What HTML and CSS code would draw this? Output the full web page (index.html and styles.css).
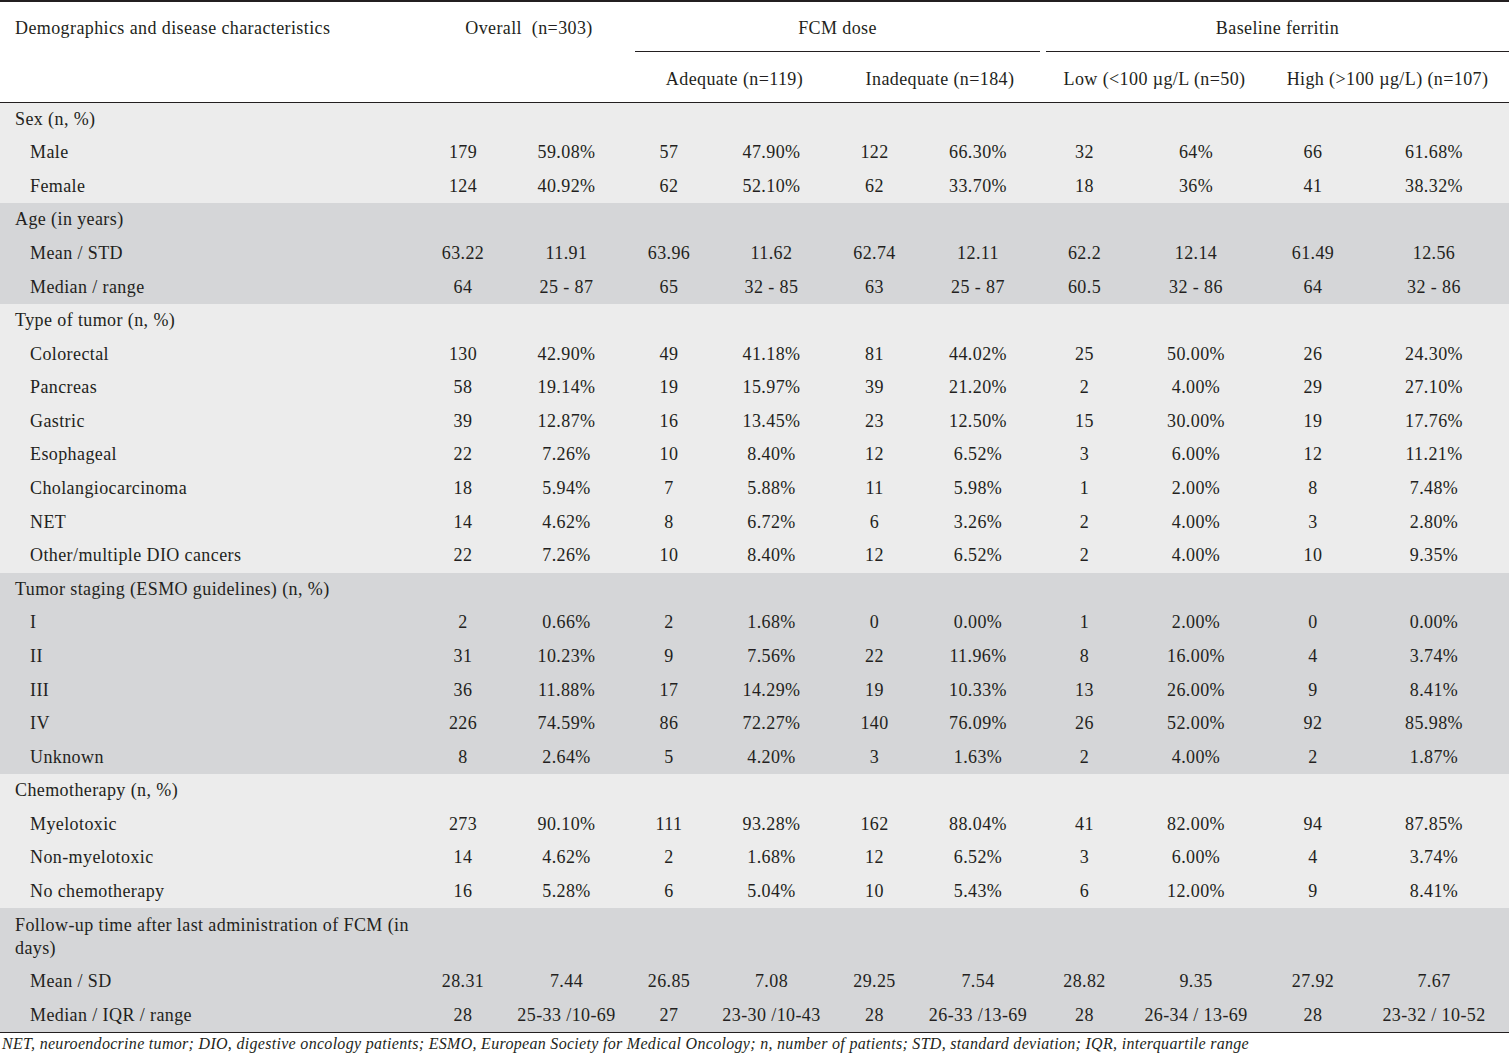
FILE: index.html
```html
<!DOCTYPE html>
<html>
<head>
<meta charset="utf-8">
<link rel="stylesheet" href="styles.css">
</head>
<body>
<div class="table">
  <div class="head">
    <div class="hc h1 lbl">Demographics and disease characteristics</div>
    <div class="hc h1 ov">Overall&nbsp; (n=303)</div>
    <div class="hc h1 grp fcm">FCM dose</div>
    <div class="hc h1 grp fer">Baseline ferritin</div>
    <div class="hc h2"></div>
    <div class="hc h2"></div>
    <div class="hc h2">Adequate (n=119)</div>
    <div class="hc h2">Inadequate (n=184)</div>
    <div class="hc h2">Low (&lt;100 µg/L (n=50)</div>
    <div class="hc h2">High (&gt;100 µg/L) (n=107)</div>
  </div>

  <div class="section light">
    <div class="row"><div class="g">Sex (n, %)</div></div>
    <div class="row"><div class="s">Male</div><div>179</div><div>59.08%</div><div>57</div><div>47.90%</div><div>122</div><div>66.30%</div><div>32</div><div>64%</div><div>66</div><div class="last">61.68%</div></div>
    <div class="row"><div class="s">Female</div><div>124</div><div>40.92%</div><div>62</div><div>52.10%</div><div>62</div><div>33.70%</div><div>18</div><div>36%</div><div>41</div><div class="last">38.32%</div></div>
  </div>

  <div class="section dark">
    <div class="row"><div class="g">Age (in years)</div></div>
    <div class="row"><div class="s">Mean / STD</div><div>63.22</div><div>11.91</div><div>63.96</div><div>11.62</div><div>62.74</div><div>12.11</div><div>62.2</div><div>12.14</div><div>61.49</div><div class="last">12.56</div></div>
    <div class="row"><div class="s">Median / range</div><div>64</div><div>25 - 87</div><div>65</div><div>32 - 85</div><div>63</div><div>25 - 87</div><div>60.5</div><div>32 - 86</div><div>64</div><div class="last">32 - 86</div></div>
  </div>

  <div class="section light">
    <div class="row"><div class="g">Type of tumor (n, %)</div></div>
    <div class="row"><div class="s">Colorectal</div><div>130</div><div>42.90%</div><div>49</div><div>41.18%</div><div>81</div><div>44.02%</div><div>25</div><div>50.00%</div><div>26</div><div class="last">24.30%</div></div>
    <div class="row"><div class="s">Pancreas</div><div>58</div><div>19.14%</div><div>19</div><div>15.97%</div><div>39</div><div>21.20%</div><div>2</div><div>4.00%</div><div>29</div><div class="last">27.10%</div></div>
    <div class="row"><div class="s">Gastric</div><div>39</div><div>12.87%</div><div>16</div><div>13.45%</div><div>23</div><div>12.50%</div><div>15</div><div>30.00%</div><div>19</div><div class="last">17.76%</div></div>
    <div class="row"><div class="s">Esophageal</div><div>22</div><div>7.26%</div><div>10</div><div>8.40%</div><div>12</div><div>6.52%</div><div>3</div><div>6.00%</div><div>12</div><div class="last">11.21%</div></div>
    <div class="row"><div class="s">Cholangiocarcinoma</div><div>18</div><div>5.94%</div><div>7</div><div>5.88%</div><div>11</div><div>5.98%</div><div>1</div><div>2.00%</div><div>8</div><div class="last">7.48%</div></div>
    <div class="row"><div class="s">NET</div><div>14</div><div>4.62%</div><div>8</div><div>6.72%</div><div>6</div><div>3.26%</div><div>2</div><div>4.00%</div><div>3</div><div class="last">2.80%</div></div>
    <div class="row"><div class="s">Other/multiple DIO cancers</div><div>22</div><div>7.26%</div><div>10</div><div>8.40%</div><div>12</div><div>6.52%</div><div>2</div><div>4.00%</div><div>10</div><div class="last">9.35%</div></div>
  </div>

  <div class="section dark">
    <div class="row"><div class="g">Tumor staging (ESMO guidelines) (n, %)</div></div>
    <div class="row"><div class="s">I</div><div>2</div><div>0.66%</div><div>2</div><div>1.68%</div><div>0</div><div>0.00%</div><div>1</div><div>2.00%</div><div>0</div><div class="last">0.00%</div></div>
    <div class="row"><div class="s">II</div><div>31</div><div>10.23%</div><div>9</div><div>7.56%</div><div>22</div><div>11.96%</div><div>8</div><div>16.00%</div><div>4</div><div class="last">3.74%</div></div>
    <div class="row"><div class="s">III</div><div>36</div><div>11.88%</div><div>17</div><div>14.29%</div><div>19</div><div>10.33%</div><div>13</div><div>26.00%</div><div>9</div><div class="last">8.41%</div></div>
    <div class="row"><div class="s">IV</div><div>226</div><div>74.59%</div><div>86</div><div>72.27%</div><div>140</div><div>76.09%</div><div>26</div><div>52.00%</div><div>92</div><div class="last">85.98%</div></div>
    <div class="row"><div class="s">Unknown</div><div>8</div><div>2.64%</div><div>5</div><div>4.20%</div><div>3</div><div>1.63%</div><div>2</div><div>4.00%</div><div>2</div><div class="last">1.87%</div></div>
  </div>

  <div class="section light">
    <div class="row"><div class="g">Chemotherapy (n, %)</div></div>
    <div class="row"><div class="s">Myelotoxic</div><div>273</div><div>90.10%</div><div>111</div><div>93.28%</div><div>162</div><div>88.04%</div><div>41</div><div>82.00%</div><div>94</div><div class="last">87.85%</div></div>
    <div class="row"><div class="s">Non-myelotoxic</div><div>14</div><div>4.62%</div><div>2</div><div>1.68%</div><div>12</div><div>6.52%</div><div>3</div><div>6.00%</div><div>4</div><div class="last">3.74%</div></div>
    <div class="row"><div class="s">No chemotherapy</div><div>16</div><div>5.28%</div><div>6</div><div>5.04%</div><div>10</div><div>5.43%</div><div>6</div><div>12.00%</div><div>9</div><div class="last">8.41%</div></div>
  </div>

  <div class="section dark">
    <div class="row"><div class="g nw">Follow-up time after last administration of FCM (in<br>days)</div></div>
    <div class="row"><div class="s">Mean / SD</div><div>28.31</div><div>7.44</div><div>26.85</div><div>7.08</div><div>29.25</div><div>7.54</div><div>28.82</div><div>9.35</div><div>27.92</div><div class="last">7.67</div></div>
    <div class="row"><div class="s">Median / IQR / range</div><div>28</div><div>25-33 /10-69</div><div>27</div><div>23-30 /10-43</div><div>28</div><div>26-33 /13-69</div><div>28</div><div>26-34 / 13-69</div><div>28</div><div class="last">23-32 / 10-52</div></div>
  </div>
</div>
<p class="note">NET, neuroendocrine tumor; DIO, digestive oncology patients; ESMO, European Society for Medical Oncology; n, number of patients; STD, standard deviation; IQR, interquartile range</p>
</body>
</html>
```

FILE: styles.css
```css
html, body {
  margin: 0;
  padding: 0;
  background: #ffffff;
}
body {
  width: 1509px;
  font-family: "Liberation Serif", "Times New Roman", serif;
  font-size: 18px;
  letter-spacing: 0.4px;
  color: #231f20;
}
.table {
  width: 1509px;
}
.head {
  display: grid;
  grid-template-columns: 426px 206px 205px 206px 223px 243px;
  border-top: 2px solid #231f20;
  border-bottom: 1.5px solid #231f20;
}
.hc {
  box-sizing: border-box;
  line-height: 23px;
  text-align: center;
  white-space: nowrap;
}
.h1 {
  height: 50px;
  padding-top: 15px;
}
.h2 {
  height: 49.5px;
  padding-top: 16px;
}
.lbl {
  text-align: left;
  padding-left: 15px;
}
.grp {
  grid-column: span 2;
  border-bottom: 1px solid #231f20;
}
.fcm {
  margin: 0 3px;
}
.fer {
  margin-left: 3px;
}
.section.light {
  background: #ececec;
}
.section.dark {
  background: #d5d6d8;
}
.row {
  display: grid;
  grid-template-columns: 411px 104px 103px 102px 103px 103px 104px 109px 114px 120px 136px;
  line-height: 23px;
}
.row > div {
  padding: 5.2px 0 5.4px;
  text-align: center;
  white-space: nowrap;
}
.row > .g {
  grid-column: 1 / -1;
  text-align: left;
  padding-left: 15px;
}
.row > .s {
  text-align: left;
  padding-left: 30px;
}
.row > .last {
  padding-right: 14px;
}
.note {
  margin: 0;
  border-top: 1.5px solid #231f20;
  padding-left: 2px;
  font-style: italic;
  font-size: 16px;
  letter-spacing: 0.3px;
  line-height: 21px;
  white-space: nowrap;
}
```
